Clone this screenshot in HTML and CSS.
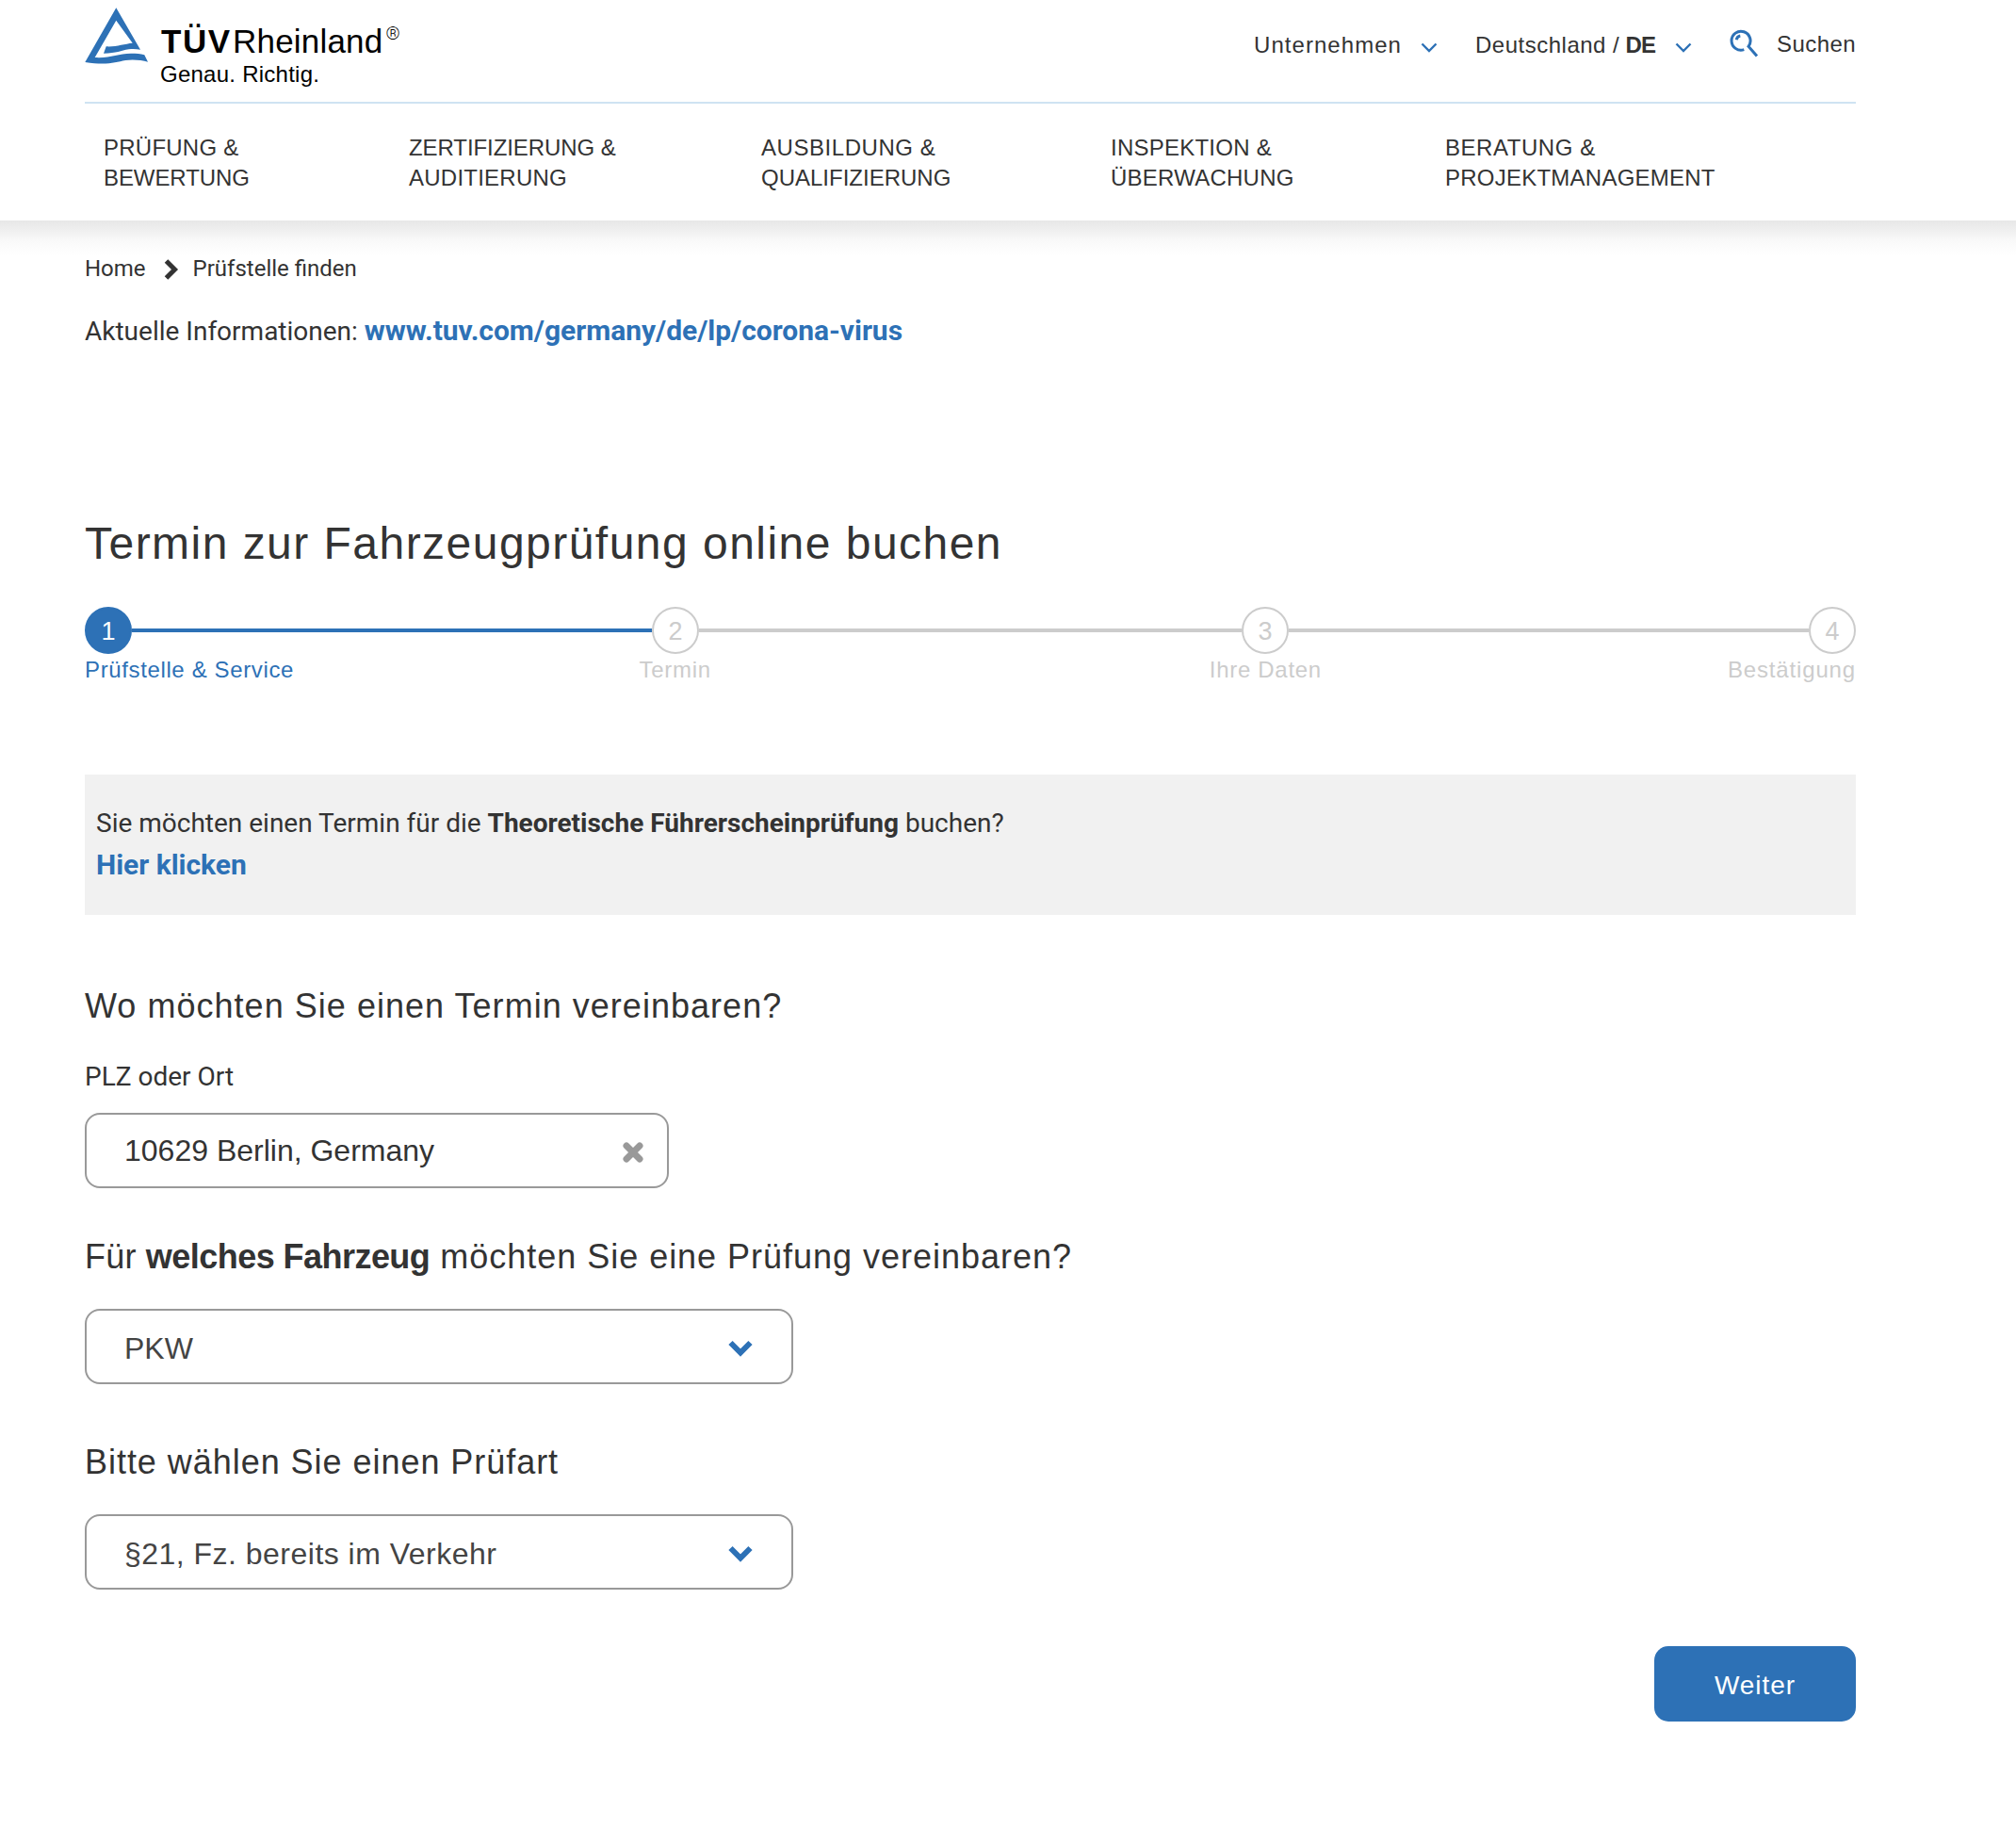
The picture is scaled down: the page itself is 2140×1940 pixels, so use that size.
FILE: index.html
```html
<!DOCTYPE html>
<html lang="de">
<head>
<meta charset="utf-8">
<title>Termin zur Fahrzeugprüfung online buchen</title>
<link rel="stylesheet" href="styles.css">
</head>
<body>
<header class="header">
  <div class="container">
    <div class="topbar">
      <a class="logo">
        <svg class="logo-mark" viewBox="0 0 68 62" width="68" height="62">
          <path d="M33.3 0.3 L59 44.700 C55 44 51 43.700 46.700 44.300 C38 45.700 34 48.500 20 48.700 L22.700 41.300 C33 42 42 38.500 50.700 37.700 L33.300 13.700 L10.700 53 C27 54 35 48.700 49 48.700 C55 48.700 59 49 63.300 50.300 L67 57.700 C60 55.500 50 54.800 43.300 56 C32 58 24 61.500 0.300 58 Z" fill="#2d71b6"/>
        </svg>
        <span class="logo-text">
          <span class="logo-name"><b>TÜV</b><span>Rheinland</span><sup>®</sup></span>
          <span class="logo-claim">Genau. Richtig.</span>
        </span>
      </a>
      <nav class="meta">
        <a class="meta-company">Unternehmen</a>
        <svg class="meta-arrow" viewBox="0 0 18 11" width="18" height="11"><path d="M1.500 1.500 L9 9 L16.500 1.500"/></svg>
        <a class="meta-country">Deutschland / <b>DE</b></a>
        <svg class="meta-arrow" viewBox="0 0 18 11" width="18" height="11"><path d="M1.500 1.500 L9 9 L16.500 1.500"/></svg>
        <svg class="meta-search" viewBox="0 0 32 32" width="32" height="32"><path d="M15.300 21.700 A10 10 0 1 1 20 18.300 L29 28.500 M7.300 11.200 A5 5 0 0 1 11.300 7"/></svg>
        <a class="meta-find">Suchen</a>
      </nav>
    </div>
    <nav class="menu">
      <a><span class="w1">PRÜFUNG &amp;</span><br><span class="w0">BEWERTUNG</span></a>
      <a><span class="w0">ZERTIFIZIERUNG &amp;</span><br><span class="w1">AUDITIERUNG</span></a>
      <a><span class="w2">AUSBILDUNG &amp;</span><br><span>QUALIFIZIERUNG</span></a>
      <a><span class="w1">INSPEKTION &amp;</span><br><span class="w1">ÜBERWACHUNG</span></a>
      <a><span class="w2">BERATUNG &amp;</span><br><span class="w1">PROJEKTMANAGEMENT</span></a>
    </nav>
  </div>
</header>
<main class="container">
  <nav class="breadcrumb">
    <a>Home</a>
    <svg viewBox="0 0 16 22" width="16" height="22"><path d="M2.500 2 L11.500 11 L2.500 20"/></svg>
    <span>Prüfstelle finden</span>
  </nav>
  <p class="notice">Aktuelle Informationen: <a class="link">www.tuv.com/germany/de/lp/corona-virus</a></p>

  <h1>Termin zur Fahrzeugprüfung online buchen</h1>
  <div class="steps">
    <span class="step active">1</span><i class="line active"></i>
    <span class="step">2</span><i class="line middle"></i>
    <span class="step">3</span><i class="line"></i>
    <span class="step">4</span>
  </div>
  <div class="labels">
    <span class="active">Prüfstelle &amp; Service</span><span>Termin</span><span>Ihre Daten</span><span>Bestätigung</span>
  </div>

  <section class="hint">
    <div>Sie möchten einen Termin für die <b>Theoretische Führerscheinprüfung</b> buchen?</div>
    <a class="link">Hier klicken</a>
  </section>

  <h2>Wo möchten Sie einen Termin vereinbaren?</h2>
  <label class="label">PLZ oder Ort</label>
  <div class="field place">
    <span>10629 Berlin, Germany</span>
    <svg viewBox="0 0 22 22" width="22" height="22"><path d="M4 4 L18 18 M18 4 L4 18"/></svg>
  </div>

  <h2 class="vehicle"><span>Für </span><b>welches Fahrzeug</b> möchten Sie eine Prüfung vereinbaren?</h2>
  <div class="field select pkw">
    <span>PKW</span>
    <svg viewBox="0 0 26 18" width="26" height="18"><path d="M2.500 3 L13 13.500 L23.500 3"/></svg>
  </div>

  <h2 class="kind">Bitte wählen Sie einen Prüfart</h2>
  <div class="field select">
    <span>§21, Fz. bereits im Verkehr</span>
    <svg viewBox="0 0 26 18" width="26" height="18"><path d="M2.500 3 L13 13.500 L23.500 3"/></svg>
  </div>

  <div class="actions"><button class="next">Weiter</button></div>
</main>
</body>
</html>
```

FILE: styles.css
```css
* { box-sizing: border-box; }
body { margin: 0; background: #fff; color: #333; font-family: "Liberation Sans", Arial, sans-serif; }
svg { display: block; flex: none; fill: none; }
.container { width: 1880px; margin-left: 90px; }

.header { height: 272px; background: linear-gradient(#fff 234px, #e7e7e7 234px, #eee 243px, #f8f8f8 254px, #fdfdfd 265px, #fff 272px); }
.topbar { display: flex; justify-content: space-between; height: 110px; border-bottom: 2px solid #cfe3f2; }
.logo { display: flex; color: #000; white-space: nowrap; }
.logo-mark { margin-top: 8px; }
.logo-text { display: flex; flex-direction: column; margin-left: 12px; padding-top: 27px; }
.logo-name { display: flex; font-size: 35px; line-height: 34px; letter-spacing: .2px; }
.logo-name b { width: 77px; padding-left: 1px; letter-spacing: 1.6px; }
.logo-name sup { margin-left: 3px; font: 300 19px/18px Roboto, sans-serif; }
.logo-claim { margin-top: 6px; font-size: 24px; line-height: 24px; letter-spacing: .25px; }

.meta { display: flex; font-size: 24px; line-height: 32px; padding-top: 32px; white-space: nowrap; }
.meta-company { width: 157px; letter-spacing: 1.05px; }
.meta-arrow { margin: 13px 0 0 20px; stroke: #2d71b6; stroke-width: 2.4; }
.meta-country { width: 192px; margin-left: 40px; letter-spacing: .5px; }
.meta-country b { margin-left: -1px; letter-spacing: -.8px; }
.meta-search { margin: -1px 0 0 40px; stroke: #2d71b6; stroke-width: 3; }
.meta-find { width: 84px; margin: -1px 0 0 18px; letter-spacing: .43px; }

.menu { display: grid; grid-template-columns: 324px 374px 371px 355px auto; padding: 31px 0 0 20px; font-size: 24px; line-height: 32px; white-space: nowrap; }
.menu .w0 { letter-spacing: -.08px; }
.menu .w1 { letter-spacing: .24px; }
.menu .w2 { letter-spacing: .55px; }

.breadcrumb { display: flex; margin-top: -3px; font: 24px/32px Roboto, sans-serif; }
.breadcrumb svg { margin: 6px 15px 0 19px; stroke: #333; stroke-width: 5; }
.notice { margin: 30px 0 0; font: 28px/40px Roboto, sans-serif; }
.link { color: #2d71b6; font-size: 30px; font-weight: 700; letter-spacing: -.02px; }

h1 { margin: 175px 0 0; font-size: 48px; line-height: 60px; font-weight: 400; letter-spacing: 1.47px; }
.steps { display: flex; align-items: center; margin-top: 37px; }
.step { width: 50px; height: 50px; border: 2px solid #ccc; border-radius: 50%; color: #ccc; font-size: 27px; line-height: 48px; text-align: center; }
.step.active { border-color: #2d71b6; background: #2d71b6; color: #fff; }
.line { flex: 552; height: 4px; background: #ccc; }
.line.middle { flex: 576; }
.line.active { background: #2d71b6; }
.labels { display: grid; grid-template-columns: 1fr 2fr 2fr 1fr; margin-top: 1px; color: #ccc; font-size: 24px; line-height: 32px; letter-spacing: .7px; text-align: center; white-space: nowrap; }
.labels .active { color: #2d71b6; text-align: left; letter-spacing: .63px; }
.labels :last-child { text-align: right; letter-spacing: .84px; }

.hint { height: 149px; margin-top: 95px; padding: 30px 12px; background: #f1f1f1; font: 28px/44px Roboto, sans-serif; }

h2 { margin: 75px 0 0; font-size: 36px; line-height: 44px; font-weight: 400; letter-spacing: 1.03px; }
.label { display: block; margin-top: 33px; font: 28px/40px Roboto, sans-serif; }
.field { display: flex; justify-content: space-between; align-items: center; width: 752px; height: 80px; padding: 0 41px 0 40px; border: 2px solid #999; border-radius: 16px; font-size: 32px; line-height: 40px; }
.place { width: 620px; margin-top: 18px; padding-right: 25px; }
.place svg { margin-top: 4px; stroke: #999; stroke-width: 7; stroke-linecap: round; }
.vehicle { margin-top: 51px; letter-spacing: .98px; }
.vehicle span { letter-spacing: .2px; }
.vehicle b { letter-spacing: -.54px; }
.kind { margin-top: 61px; letter-spacing: .96px; }
.select { margin-top: 33px; color: #444; letter-spacing: .48px; }
.select span { padding-top: 3px; }
.select svg { margin-top: 4px; stroke: #2d71b6; stroke-width: 6; }
.pkw { letter-spacing: 0; }
.actions { display: flex; justify-content: flex-end; margin-top: 60px; }
.next { width: 214px; height: 80px; padding: 4px 0 0; border: 0; border-radius: 15px; background: #2d71b6; color: #fff; font: 28px/40px "Liberation Sans", Arial, sans-serif; letter-spacing: .93px; }
```
